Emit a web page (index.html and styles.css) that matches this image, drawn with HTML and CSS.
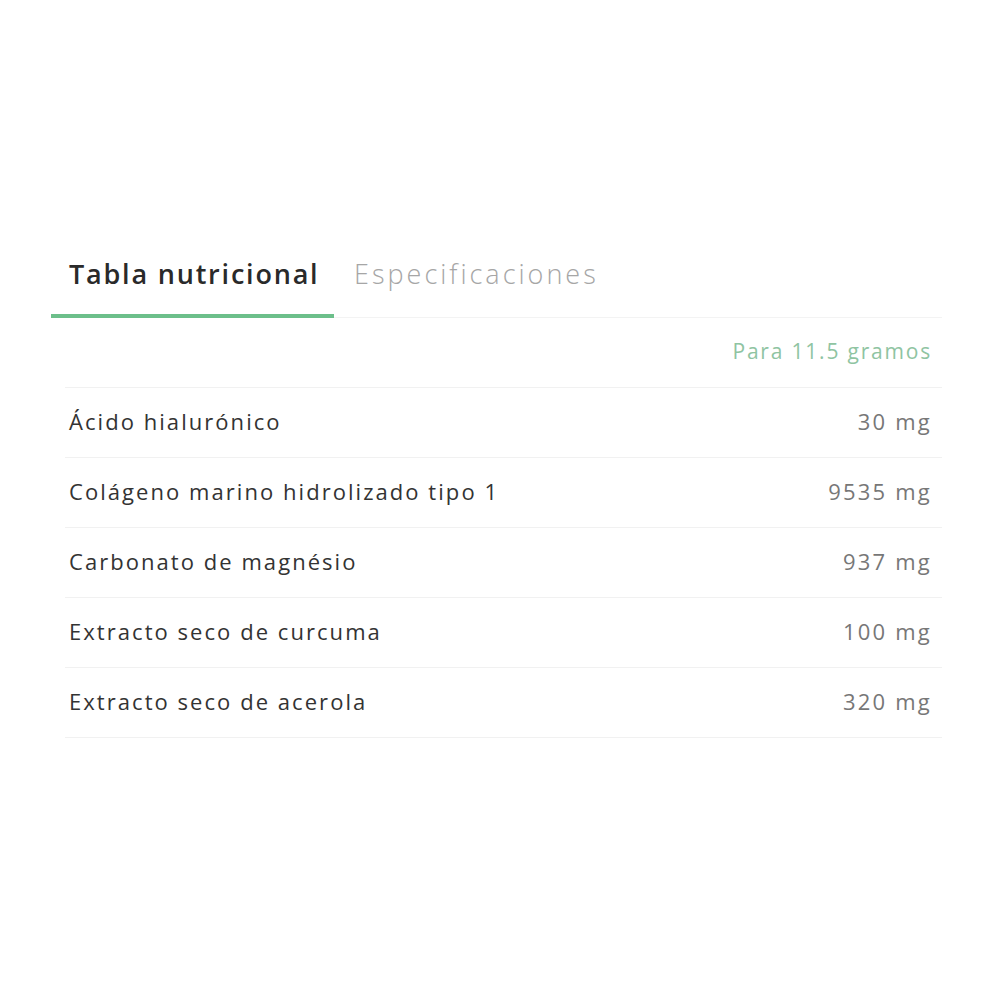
FILE: index.html
```html
<!DOCTYPE html>
<html lang="es">
<head>
<meta charset="utf-8">
<link rel="stylesheet" href="styles.css">
</head>
<body>
<div class="panel">
  <div class="tabs">
    <div class="tab active">Tabla nutricional</div>
    <div class="tab">Especificaciones</div>
  </div>
  <div class="table">
    <div class="row head"><span class="val green">Para 11.5 gramos</span></div>
    <div class="row"><span class="label">Ácido hialurónico</span><span class="val">30 mg</span></div>
    <div class="row"><span class="label">Colágeno marino hidrolizado tipo 1</span><span class="val">9535 mg</span></div>
    <div class="row"><span class="label">Carbonato de magnésio</span><span class="val">937 mg</span></div>
    <div class="row"><span class="label">Extracto seco de curcuma</span><span class="val">100 mg</span></div>
    <div class="row"><span class="label">Extracto seco de acerola</span><span class="val">320 mg</span></div>
  </div>
</div>
</body>
</html>
```
FILE: styles.css
```css
html, body { margin: 0; padding: 0; background: #fff; }
body { font-family: "Open Sans", "Liberation Sans", sans-serif; }
.panel { padding-top: 249px; padding-left: 51px; width: 891px; }
.tabs { display: flex; border-bottom: 1px solid #f3f3f3; }
.tab { font-size: 27px; line-height: 50px; padding: 0 0 15px 0; color: #a6a6a6; font-weight: 300; letter-spacing: 3px; }
.tab.active { width: 265px; padding-left: 18px; color: #2a2a2a; font-weight: 600; letter-spacing: 1.8px; border-bottom: 4px solid #6cbf8a; margin-bottom: -1px; margin-right: 20px; }
.table { margin-left: 14px; }
.row { display: flex; justify-content: space-between; align-items: center; height: 66px; padding: 0 10px 3px 4px; border-bottom: 1px solid #f1f1f1; }
.row.head { justify-content: flex-end; }
.label { font-size: 22px; color: #333; font-weight: 500; letter-spacing: 2.05px; }
.val { font-size: 22px; color: #777; letter-spacing: 2.2px; font-weight: 400; }
.val.green { color: #8fc4a2; font-size: 21px; letter-spacing: 1.8px; }
```
